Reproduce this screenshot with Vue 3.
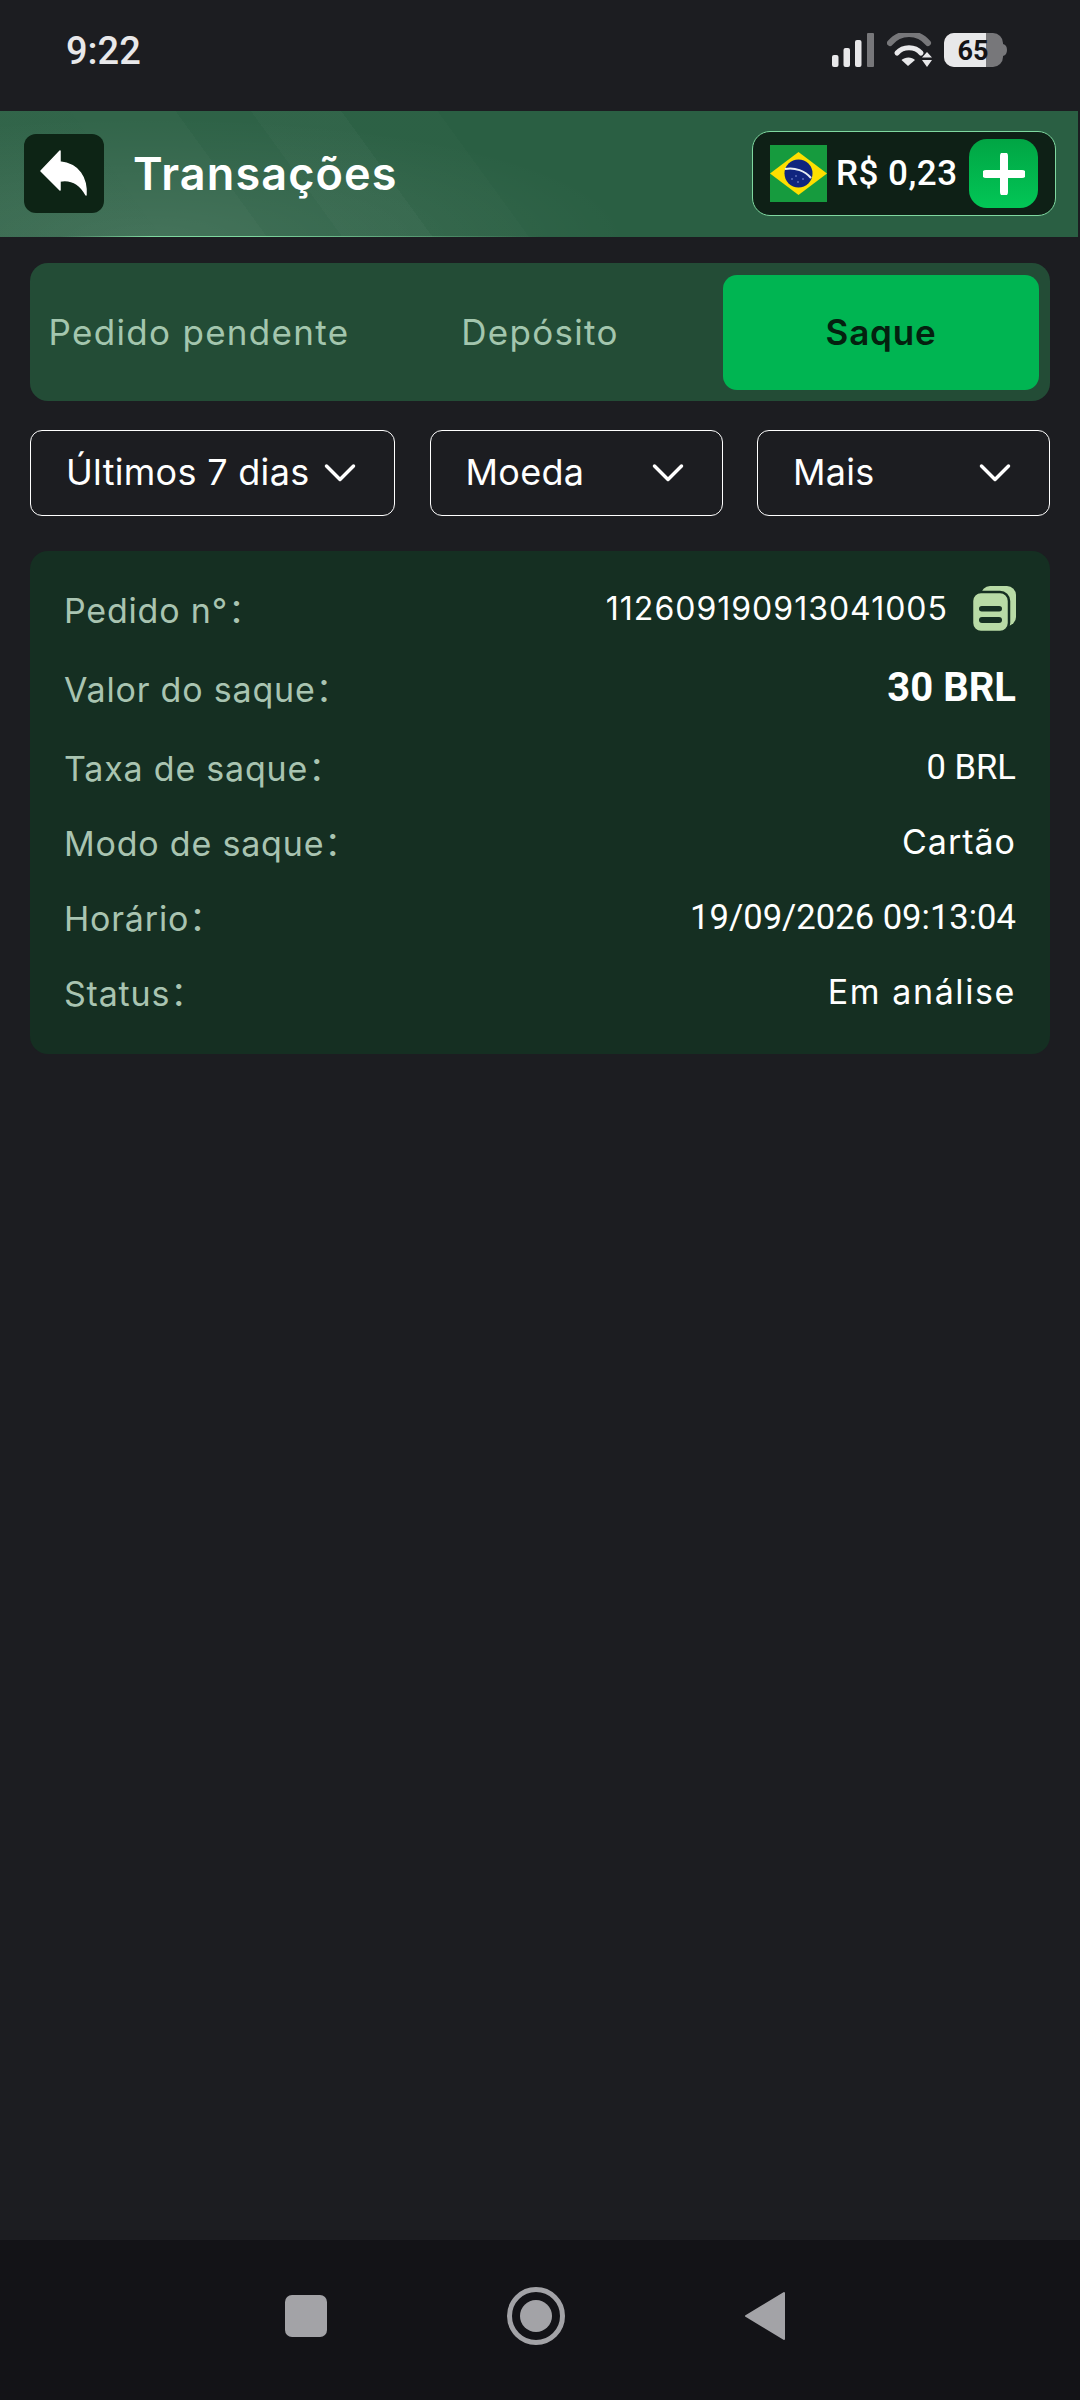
<script setup>
const tabs = [
  { id: 'pending', label: 'Pedido pendente' },
  { id: 'deposit', label: 'Depósito' },
  { id: 'withdraw', label: 'Saque', active: true },
];

const filters = [
  { id: 'days', label: 'Últimos 7 dias' },
  { id: 'coin', label: 'Moeda' },
  { id: 'more', label: 'Mais' },
];

const rows = [
  { label: 'Pedido n°', value: '112609190913041005', cls: 'digits', copy: true },
  { label: 'Valor do saque', value: '30 BRL', cls: 'amount' },
  { label: 'Taxa de saque', value: '0 BRL', cls: 'num' },
  { label: 'Modo de saque', value: 'Cartão', cls: 'mont' },
  { label: 'Horário', value: '19/09/2026 09:13:04', cls: 'num' },
  { label: 'Status', value: 'Em análise', cls: 'mont wide' },
];
</script>

<template>
  <div class="page">
    <div class="status-bar">
      <span class="clock">9:22</span>
      <div class="status-icons">
        <svg width="42" height="34" viewBox="0 0 42 34">
          <rect x="0" y="22" width="6.500" height="12" rx="2" fill="#e8e8ea" />
          <rect x="11.500" y="15" width="6.500" height="19" rx="2" fill="#e8e8ea" />
          <rect x="23" y="7" width="6.500" height="27" rx="2" fill="#e8e8ea" />
          <rect x="35" y="0" width="7" height="34" rx="1" fill="#77777a" />
        </svg>
        <svg class="wifi" width="46" height="34" viewBox="0 0 46 34">
          <path d="M3 10 C13 -2 31 -2 41 10" fill="none" stroke="#77777a" stroke-width="6" stroke-linecap="round" />
          <path d="M10 20 C16 13 28 13 34 20" fill="none" stroke="#e8e8ea" stroke-width="5" stroke-linecap="round" />
          <path d="M14.500 27 C18 23.500 25 23.500 28 27 L21 33 Z" fill="#e8e8ea" />
          <path d="M40 19 L45 24.500 H35 Z M40 34 L45 27 H35 Z" fill="#e8e8ea" />
        </svg>
        <svg width="63" height="34" viewBox="0 0 63 34">
          <rect x="0" y="0" width="59" height="34" rx="10" fill="#77777a" />
          <path d="M10 0 H42 V34 H10 A10 10 0 0 1 0 24 V10 A10 10 0 0 1 10 0 Z" fill="#e8e8ea" />
          <path d="M59 11 Q63 12 63 17 Q63 22 59 23 Z" fill="#77777a" />
          <text x="29" y="27" text-anchor="middle" class="battery-text">65</text>
        </svg>
      </div>
    </div>

    <header class="top-bar">
      <button type="button" class="back-btn">
        <svg width="80" height="79" viewBox="0 0 80 79">
          <path d="M36 17 L17 37 L36 56 V47 C47 45 56 50 62 61 C63 44 55 30 36 28 Z" fill="#fff" stroke="#fff" stroke-width="1.500" stroke-linejoin="round" />
        </svg>
      </button>
      <h1 class="title">Transações</h1>
      <div class="balance">
        <svg class="flag" width="57" height="57" viewBox="0 0 57 57">
          <rect width="57" height="57" fill="#169b3e" />
          <path d="M28.500 7 L57 28.500 L28.500 50 L0 28.500 Z" fill="#fedf00" />
          <circle cx="28.500" cy="28.500" r="14" fill="#10257f" />
          <path d="M15 24 C25 22 35 26 41 33" fill="none" stroke="#e8eef2" stroke-width="2" />
          <circle cx="22" cy="34" r="0.800" fill="#8fa3e0" />
          <circle cx="28" cy="37" r="0.800" fill="#8fa3e0" />
          <circle cx="33" cy="34" r="0.800" fill="#8fa3e0" />
          <circle cx="26" cy="31" r="0.800" fill="#8fa3e0" />
        </svg>
        <span class="balance-value">R$ 0,23</span>
        <button type="button" class="add-btn">
          <svg width="42" height="42" viewBox="0 0 42 42">
            <path d="M21 3 V39 M3 21 H39" stroke="#fff" stroke-width="8" stroke-linecap="round" />
          </svg>
        </button>
      </div>
    </header>

    <main class="content">
      <nav class="tabs">
        <div v-for="tab in tabs" :key="tab.id" class="tab" :class="{ active: tab.active }">
          {{ tab.label }}
        </div>
      </nav>

      <div class="filters">
        <div v-for="f in filters" :key="f.id" class="filter" :class="f.id">
          <span>{{ f.label }}</span>
          <svg width="32" height="20" viewBox="0 0 32 20">
            <path d="M2.500 3 L16 16.500 L29.500 3" fill="none" stroke="#fff" stroke-width="3.500" stroke-linecap="round" stroke-linejoin="round" />
          </svg>
        </div>
      </div>

      <section class="card">
        <div v-for="row in rows" :key="row.label" class="row">
          <span class="row-label">{{ row.label }}<i class="colon">：</i></span>
          <span class="row-value" :class="row.cls">
            {{ row.value }}
            <svg v-if="row.copy" class="copy" width="44" height="46" viewBox="0 0 44 46">
              <rect x="9" y="0" width="35" height="40" rx="9" fill="#b8dba6" />
              <rect x="0" y="6" width="37" height="40" rx="9" fill="#b8dba6" stroke="#152f22" stroke-width="2.500" />
              <rect x="7" y="20" width="23" height="5.500" rx="2.750" fill="#152f22" />
              <rect x="7" y="31" width="23" height="6" rx="3" fill="#152f22" />
            </svg>
          </span>
        </div>
      </section>
    </main>

    <footer class="nav-bar">
      <svg width="42" height="42" viewBox="0 0 42 42">
        <rect width="42" height="42" rx="7" fill="#a3a3a7" />
      </svg>
      <svg width="58" height="58" viewBox="0 0 58 58">
        <circle cx="29" cy="29" r="26.500" fill="none" stroke="#a3a3a7" stroke-width="5" />
        <circle cx="29" cy="29" r="16" fill="#a3a3a7" />
      </svg>
      <svg width="42" height="50" viewBox="0 0 42 50">
        <path d="M2 25 L40 2 V48 Z" fill="#a3a3a7" stroke="#a3a3a7" stroke-width="2" stroke-linejoin="round" />
      </svg>
    </footer>
  </div>
</template>

<style>
html,
body {
  margin: 0;
  background: #1c1d21;
}
</style>

<style scoped>
.page {
  width: 1080px;
  height: 2400px;
  display: flex;
  flex-direction: column;
  background: #1c1d21;
  font-family: Inter, "Noto Sans", sans-serif;
  color: #fff;
}

.status-bar {
  height: 111px;
  box-sizing: border-box;
  display: flex;
  align-items: flex-start;
  justify-content: space-between;
  padding: 30px 73px 0 66px;
}

.clock {
  font-family: Roboto, sans-serif;
  font-size: 38px;
  font-weight: 500;
  line-height: 43px;
  color: #e8e8ea;
}

.status-icons {
  display: flex;
  gap: 13px;
  padding-top: 3px;
}

.wifi {
  margin-right: -2px;
}

.battery-text {
  font-family: Roboto, sans-serif;
  font-size: 27px;
  font-weight: 700;
  fill: #141416;
}

.top-bar {
  width: 1078px;
  height: 126px;
  box-sizing: border-box;
  display: flex;
  align-items: center;
  padding: 0 22px 1px 24px;
  background:
    linear-gradient(90deg, transparent 60px, #7fd8a0 150px, #7fd8a0 250px, transparent 540px) bottom / 100% 1.500px no-repeat,
    radial-gradient(ellipse 480px 120px at 150px 126px, rgba(255, 255, 255, 0.09), transparent),
    linear-gradient(54deg,
      rgba(255, 255, 255, 0.035) 0 131px,
      rgba(255, 255, 255, 0.04) 131px 216px,
      rgba(255, 255, 255, 0.018) 216px 277px,
      rgba(255, 255, 255, 0.034) 277px 350px,
      rgba(255, 255, 255, 0.012) 350px 428px,
      rgba(255, 255, 255, 0) 428px),
    #2a5f43;
}

.back-btn {
  flex: none;
  width: 80px;
  height: 79px;
  padding: 0;
  border: none;
  border-radius: 12px;
  background: #0d2415;
}

.back-btn svg {
  display: block;
}

.title {
  margin: 0 0 0 29px;
  font-size: 45px;
  font-weight: 600;
  letter-spacing: 1.1px;
  line-height: 52px;
}

.balance {
  margin-left: auto;
  width: 304px;
  height: 85px;
  box-sizing: border-box;
  display: flex;
  align-items: center;
  padding: 0 17px;
  border: 1px solid #7fd8a0;
  border-radius: 18px;
  background: #0e2016;
}

.flag {
  flex: none;
}

.balance-value {
  margin-left: 9px;
  font-family: Roboto, sans-serif;
  font-size: 35px;
  font-weight: 500;
  letter-spacing: 0.5px;
  white-space: nowrap;
}

.add-btn {
  margin-left: auto;
  width: 69px;
  height: 69px;
  padding: 0;
  display: flex;
  align-items: center;
  justify-content: center;
  border: none;
  border-radius: 18px;
  background: linear-gradient(180deg, #01a544, #02c656);
}

.content {
  flex: 1;
  display: flex;
  flex-direction: column;
  padding: 26px 30px 0;
}

.tabs {
  height: 138px;
  box-sizing: border-box;
  display: grid;
  grid-template-columns: repeat(3, 316px);
  gap: 25px;
  padding: 12px 11px 11px;
  border-radius: 18px;
  background: #234c36;
}

.tab {
  display: flex;
  align-items: center;
  justify-content: center;
  padding-bottom: 2px;
  box-sizing: border-box;
  border-radius: 14px;
  font-size: 35px;
  letter-spacing: 1.3px;
  color: #a3c6ae;
  white-space: nowrap;
}

.tab.active {
  background: #00b552;
  color: #04210f;
  font-weight: 600;
  letter-spacing: 0.8px;
}

.filters {
  display: flex;
  justify-content: space-between;
  margin-top: 29px;
}

.filter {
  height: 86px;
  box-sizing: border-box;
  display: flex;
  align-items: center;
  justify-content: space-between;
  padding: 0 38px 2px 35px;
  border: 1px solid #fff;
  border-radius: 12px;
  font-size: 36px;
  letter-spacing: 0.3px;
}

.filter svg {
  margin-top: 2px;
}

.filter.days {
  width: 365px;
}

.filter.coin {
  width: 293px;
}

.filter.more {
  width: 293px;
}

.card {
  margin-top: 35px;
  height: 503px;
  box-sizing: border-box;
  display: flex;
  flex-direction: column;
  padding: 16px 34px 0;
  border-radius: 18px;
  background: #152f22;
}

.row {
  height: 75px;
  flex: none;
  display: flex;
  align-items: center;
  justify-content: space-between;
  font-size: 34px;
}

.row:nth-child(-n + 3) {
  margin-top: 4px;
}

.row-label {
  color: #a9c4b1;
  letter-spacing: 0.8px;
  white-space: nowrap;
}

.colon {
  font-style: normal;
  font-family: "Noto Sans CJK SC", sans-serif;
  letter-spacing: 0;
  margin-right: -20px;
}

.row-value {
  display: flex;
  align-items: center;
  gap: 24px;
  white-space: nowrap;
}

.mont {
  letter-spacing: 1px;
}

.mont.wide {
  letter-spacing: 1.6px;
}

.digits {
  font-size: 32px;
  letter-spacing: 1px;
}

.num {
  font-family: Roboto, sans-serif;
  font-size: 34.600px;
}

.amount {
  font-family: Roboto, sans-serif;
  font-size: 40px;
  font-weight: 700;
}

.nav-bar {
  height: 160px;
  box-sizing: border-box;
  display: flex;
  align-items: center;
  justify-content: space-between;
  padding: 0 294px 8px 285px;
  background: #131317;
}
</style>
